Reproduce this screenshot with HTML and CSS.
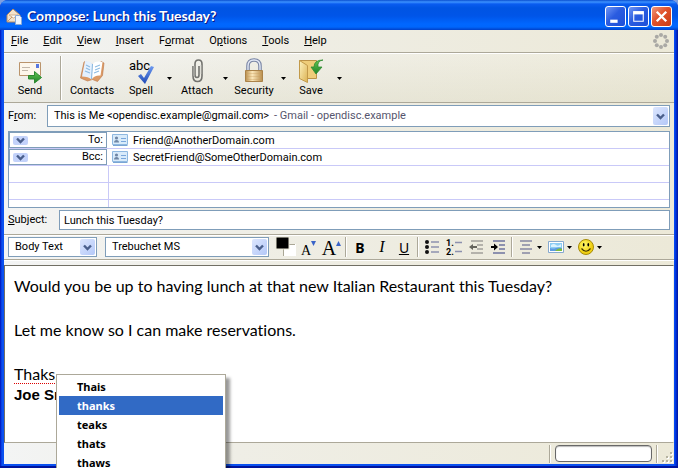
FILE: index.html
```html
<!DOCTYPE html>
<html lang="en">
<head>
<meta charset="utf-8">
<title>Compose: Lunch this Tuesday?</title>
<link rel="stylesheet" href="styles.css">
</head>
<body>
<svg class="defs" aria-hidden="true">
  <defs>
    <linearGradient id="gold" x1="0" x2="1" y1="0" y2="0"><stop offset="0" stop-color="#b98f4e"/><stop offset=".4" stop-color="#fbe6b8"/><stop offset="1" stop-color="#b88d4c"/></linearGradient>
    <linearGradient id="folder" x1="0" x2="1" y1="0" y2="1"><stop offset="0" stop-color="#fdf3c0"/><stop offset="1" stop-color="#dcb252"/></linearGradient>
    <linearGradient id="green" x1="0" x2="0" y1="0" y2="1"><stop offset="0" stop-color="#62c552"/><stop offset="1" stop-color="#1f8328"/></linearGradient>
    <linearGradient id="tick" x1="0" x2="0" y1="0" y2="1"><stop offset="0" stop-color="#6d9af0"/><stop offset="1" stop-color="#1f49b5"/></linearGradient>
    <radialGradient id="smile" cx=".4" cy=".35"><stop offset="0" stop-color="#fffa70"/><stop offset="1" stop-color="#f0cf12"/></radialGradient>
    <symbol id="chevron" viewBox="0 0 9 7"><path d="M1 1.5 4.5 5 8 1.5" fill="none" stroke="#4a5f8c" stroke-width="2.4"/></symbol>
    <symbol id="down" viewBox="0 0 5 3"><path d="M0 0h5L2.500 3z"/></symbol>
    <symbol id="card" viewBox="0 0 16 12"><path d="M.5.5h15v10H.5z" fill="#d9ebfa" stroke="#8fb8e0"/><path d="M1 11.5h14.500" stroke="#7aa5d4"/><circle cx="4.500" cy="4" r="1.600" fill="#6f86a5"/><path d="M2 8.500q0-2.500 2.500-2.500T7 8.500z" fill="#6f86a5"/><path d="M9 4.500h5M9 7.500h5" stroke="#7aa7dc"/></symbol>
  </defs>
</svg>
<div class="window">
  <header class="titlebar">
    <svg class="app-icon" viewBox="0 0 17 17"><path d="M1 7 7 1l7 6v7H1z" fill="#f3e2cb" stroke="#b58a62"/><path d="M3 7h9l-4.500 3z" fill="#fff" stroke="#d0ad86"/><path d="m1 14 5-5M14 14 9 9" stroke="#c49a70"/><path d="M9.500 7.500h4l2 2v7h-6z" fill="#eef5ff" stroke="#8aa9d6"/></svg>
    <h1>Compose: Lunch this Tuesday?</h1>
    <div class="controls">
      <button class="ctl" aria-label="Minimize"><svg viewBox="0 0 18 18"><path d="M4 12h7v3H4z" fill="#fff"/></svg></button>
      <button class="ctl" aria-label="Maximize"><svg viewBox="0 0 18 18"><path d="M4.500 4.500h9v9h-9z" fill="none" stroke="#fff"/><path d="M4 4h10v3H4z" fill="#fff"/></svg></button>
      <button class="ctl close" aria-label="Close"><svg viewBox="0 0 18 18"><path d="m4.500 4.500 9 9m0-9-9 9" stroke="#fff" stroke-width="2.200"/></svg></button>
    </div>
  </header>
  <div class="content">
    <nav class="menubar">
      <button><u>F</u>ile</button><button><u>E</u>dit</button><button><u>V</u>iew</button><button><u>I</u>nsert</button><button>F<u>o</u>rmat</button><button>O<u>p</u>tions</button><button><u>T</u>ools</button><button><u>H</u>elp</button>
      <svg class="throbber" viewBox="0 0 16 16" fill="#aaa9a5"><circle cx="8" cy="2" r="2"/><circle cx="12.200" cy="3.800" r="2"/><circle cx="14" cy="8" r="2"/><circle cx="12.200" cy="12.200" r="2"/><circle cx="8" cy="14" r="2"/><circle cx="3.800" cy="12.200" r="2"/><circle cx="2" cy="8" r="2"/><circle cx="3.800" cy="3.800" r="2"/></svg>
    </nav>
    <div class="toolbar">
      <button class="tool send"><svg viewBox="0 0 26 26"><path d="M2.500 4.500h21v13h-21z" fill="#fdf7ec" stroke="#ba946c"/><path d="M5 9.500h8M5 12.500h6" stroke="#c2b7aa"/><path d="M19 6h3v4h-3z" fill="#5878e0"/><path d="M11.500 17.500h6v-4l7 6-7 5.500v-4h-6z" fill="url(#green)" stroke="#2c8a31"/></svg>Send</button>
      <span class="divider"></span>
      <button class="tool contacts"><svg viewBox="0 0 26 26"><path d="M5 4 1.500 20l7 3 5-1.500 5 2 5-6L25 5l-3-1.500-1 1-7 2-8-3z" fill="#dc9a66" stroke="#b97345" stroke-width=".6"/><path d="M6 3q5 0 7.500 3l-1 15.500q-3-3-9.500-3z" fill="#e4f1ff"/><path d="M13.500 6q3-3.500 10-2l-2 13.500q-6-.5-9 4z" fill="#fff"/><path d="M13.500 6l-1 15M7 7l4 2M7 10l4 2M6 13l5 2M16 9l5-2M16 12l5-2M15 15l5-2" fill="none" stroke="#8dbbe2" stroke-width="1.100"/></svg>Contacts</button>
      <button class="tool spell"><svg viewBox="0 0 26 26"><text x="1" y="12" class="abc">abc</text><path d="m10 18 3-2 3 4 7-12 3 1-9 17z" fill="url(#tick)"/></svg>Spell</button>
      <button class="drop" aria-label="Spell options"><svg><use href="#down"/></svg></button>
      <button class="tool attach"><svg viewBox="0 0 26 26" fill="none" stroke="#72726e" stroke-width="1.600"><path d="M9 8v10q0 5.500 4.500 5.500T18 18V6q0-4-3.500-4T11 6v11q0 2.500 2 2.500t2-2.500V8"/><path d="M10 8v10M17 7v9" stroke="#c5c5c0" stroke-width=".7"/></svg>Attach</button>
      <button class="drop" aria-label="Attach options"><svg><use href="#down"/></svg></button>
      <button class="tool security"><svg viewBox="0 0 26 26"><path d="M7 13V8q0-6 6-6t6 6v5" fill="none" stroke="#7a86a5" stroke-width="3.600"/><path d="M7 13V8q0-6 6-6t6 6v5" fill="none" stroke="#e2e8f5" stroke-width="1.400"/><path d="M4.500 12.500h17v11h-17z" fill="url(#gold)" stroke="#aa8248"/><path d="M5 15.500h16M5 18.500h16M5 21.500h16" stroke="#c99f5f" stroke-opacity=".35"/></svg>Security</button>
      <button class="drop" aria-label="Security options"><svg><use href="#down"/></svg></button>
      <button class="tool save"><svg viewBox="0 0 26 26"><path d="M1.500 2.500h17v18h-17z" fill="#efcd79" stroke="#bb9247"/><path d="m1.500 2.500 8 5v17l-8-4z" fill="url(#folder)" stroke="#c29a4a"/><path d="M25 2q-6 1-5 7h4l-6 7-5-7h3Q16 2 25 2z" fill="url(#green)" stroke="#2e8c31" stroke-width=".8"/></svg>Save</button>
      <button class="drop" aria-label="Save options"><svg><use href="#down"/></svg></button>
    </div>
    <form class="headers">
      <div class="field">
        <label for="from">F<u>r</u>om:</label>
        <div class="select">
          <select id="from"><option>This is Me &lt;opendisc.example@gmail.com&gt;</option></select>
          <span class="account">- Gmail - opendisc.example</span>
          <svg class="arrow"><use href="#chevron" x="3" y="6" width="9" height="7"/></svg>
        </div>
      </div>
      <div class="recipients">
        <div class="recipient"><div class="kind"><select aria-label="Recipient type 1"><option>To:</option></select><svg><use href="#chevron" x="3" y="1" width="9" height="7"/></svg></div><svg class="card"><use href="#card"/></svg><input aria-label="Recipient 1" value="Friend@AnotherDomain.com"></div>
        <div class="recipient"><div class="kind"><select aria-label="Recipient type 2"><option>Bcc:</option></select><svg><use href="#chevron" x="3" y="1" width="9" height="7"/></svg></div><svg class="card"><use href="#card"/></svg><input aria-label="Recipient 2" value="SecretFriend@SomeOtherDomain.com"></div>
        <div class="recipient blank"></div>
        <div class="recipient blank"></div>
        <div class="recipient blank"></div>
      </div>
      <div class="field subject">
        <label for="subject"><u>S</u>ubject:</label>
        <input id="subject" value="Lunch this Tuesday?">
      </div>
    </form>
    <div class="formatbar">
      <div class="select style"><select aria-label="Paragraph style"><option>Body Text</option></select><svg class="arrow"><use href="#chevron" x="3" y="5" width="9" height="7"/></svg></div>
      <div class="select font"><select aria-label="Font"><option>Trebuchet MS</option></select><svg class="arrow"><use href="#chevron" x="3" y="5" width="9" height="7"/></svg></div>
      <button class="fmt swatch" aria-label="Text colour"><svg viewBox="0 0 22 20"><path d="M8 7h13v12H8z" fill="#fff"/><path d="M20 7.500H8.500V19" fill="none" stroke="#aaa796"/><path d="M1 0h13v12H1z" fill="#000" stroke="#ece9d8"/></svg></button>
      <button class="fmt letter small" aria-label="Smaller">A<svg viewBox="0 0 5 5"><path d="M0 0h5L2.500 5z"/></svg></button>
      <button class="fmt letter large" aria-label="Larger">A<svg viewBox="0 0 5 5"><path d="M0 5h5L2.500 0z"/></svg></button>
      <span class="divider"></span>
      <button class="fmt bold" aria-label="Bold">B</button>
      <button class="fmt italic" aria-label="Italic">I</button>
      <button class="fmt under" aria-label="Underline">U</button>
      <span class="divider"></span>
      <button class="fmt list" aria-label="Bulleted list"><svg viewBox="0 0 16 16"><g fill="#111"><circle cx="3" cy="3" r="2"/><circle cx="3" cy="8" r="2"/><circle cx="3" cy="13" r="2"/></g><path d="M7 3h8M7 8h8M7 13h8" stroke="#8d91ae" stroke-width="1.600"/></svg></button>
      <button class="fmt list" aria-label="Numbered list"><svg viewBox="0 0 16 16"><text x="0" y="7" class="num">1.</text><text x="0" y="16" class="num">2.</text><path d="M9 3.500h7M9 12.500h7" stroke="#8d91ae" stroke-width="1.600"/></svg></button>
      <button class="fmt indent" aria-label="Outdent"><svg viewBox="0 0 16 16"><path d="M3 2h12M9 6h6M9 10h6M3 14h12" stroke="#b4b2ab" stroke-width="2"/><path d="m1 8 4-3v2h4v2H5v2z" fill="#65645d"/></svg></button>
      <button class="fmt indent" aria-label="Indent"><svg viewBox="0 0 16 16"><path d="M3 2h12M9 6h6M9 10h6M3 14h12" stroke="#8d91ae" stroke-width="2"/><path d="M8 8 4 4.500V7H1v2h3v2.500z"/></svg></button>
      <span class="divider"></span>
      <button class="fmt wide" aria-label="Align"><svg viewBox="0 0 16 16"><path d="M2 2h12M4 6h8M2 10h12M4 14h8" stroke="#8588a2" stroke-width="1.700"/></svg><svg class="tri"><use href="#down"/></svg></button>
      <button class="fmt wide" aria-label="Insert picture"><svg viewBox="0 0 16 16"><path d="M.5 2.500h15v11H.5z" fill="#fff" stroke="#85a9cf"/><path d="M2 4h12v8H2z" fill="#8dcdf4"/><path d="M3 6q3-2 5 0t5-1v3H3z" fill="#daf2ff"/><path d="M2 9q3 1 6 0t6 0v3H2z" fill="#5d9be0"/><path d="M7 12q4-4 7-2v2z" fill="#7dbd3c"/></svg><svg class="tri"><use href="#down"/></svg></button>
      <button class="fmt wide" aria-label="Insert smiley"><svg viewBox="0 0 16 16"><circle cx="8" cy="8" r="7.500" fill="url(#smile)" stroke="#a58b0b"/><ellipse cx="5.700" cy="5.700" rx=".9" ry="1.700"/><ellipse cx="10.300" cy="5.700" rx=".9" ry="1.700"/><path d="M3.500 9.500q4.500 5.500 9 0" fill="none" stroke="#3e3300" stroke-width="1.200"/></svg><svg class="tri"><use href="#down"/></svg></button>
    </div>
    <main class="editor">
      <div class="message" contenteditable="true" role="textbox" aria-label="Message body" spellcheck="false">
        <p>Would you be up to having lunch at that new Italian Restaurant this Tuesday?</p>
        <p><br></p>
        <p>Let me know so I can make reservations.</p>
        <p><br></p>
        <p><span class="misspelt">Thaks,</span></p>
        <p class="signature">Joe Smith</p>
      </div>
      <div class="suggestions" role="menu">
        <button role="menuitem">Thais</button>
        <button role="menuitem" class="active">thanks</button>
        <button role="menuitem">teaks</button>
        <button role="menuitem">thats</button>
        <button role="menuitem">thaws</button>
      </div>
    </main>
    <footer class="statusbar">
      <span class="divider"></span>
      <div class="progress" role="progressbar" aria-label="Progress"></div>
      <span class="divider"></span>
      <svg class="grip" viewBox="0 0 12 12"><path d="M9 1h2v2H9zM5 5h2v2H5zM9 5h2v2H9zM1 9h2v2H1zM5 9h2v2H5zM9 9h2v2H9z" fill="#fff"/><path d="M8 0h2v2H8zM4 4h2v2H4zM8 4h2v2H8zM0 8h2v2H0zM4 8h2v2H4zM8 8h2v2H8z" fill="#b5b29f"/></svg>
    </footer>
  </div>
</div>
</body>
</html>
```

FILE: styles.css
```css
* { box-sizing: border-box; }

body {
  margin: 0;
  overflow: hidden;
  background: #7f9fe0;
  color: #000;
  font: 11px/14px Roboto, "Noto Sans", sans-serif;
}

button, select, input {
  margin: 0;
  padding: 0;
  border: 0;
  background: none;
  color: inherit;
  font: inherit;
  appearance: none;
}

.defs { position: absolute; width: 0; height: 0; }

.window {
  display: flex;
  flex-direction: column;
  height: 100vh;
  padding: 0 4px 4px;
  border-radius: 8px 8px 0 0;
  background: linear-gradient(90deg, #0010b8 0, #0a50f0 2px, #0a50f0 calc(100% - 4px), #0040f0 calc(100% - 3px), #00139c 100%);
  box-shadow: inset 0 -2px #00139c;
}

.titlebar {
  display: flex;
  align-items: center;
  gap: 4px;
  height: 30px;
  margin: 0 -4px;
  padding: 2px 6px 0;
  border-radius: 8px 8px 0 0;
  background: linear-gradient(#0a4fd0 0, #3c92ff 2px, #0a5cf0 4px, #0054e3 8px, #0055e8 16px, #0067ff 24px, #0066fc 27px, #0040c8 30px);
}

.titlebar h1 {
  flex: 1;
  margin: 0;
  color: #fff;
  font: bold 14px/18px Lato, sans-serif;
  text-shadow: 1px 1px #0a1883;
}

.app-icon { width: 17px; height: 17px; }

.controls { display: flex; gap: 2px; }

.ctl {
  width: 21px;
  height: 21px;
  border: 1px solid #fff;
  border-radius: 3px;
  background: linear-gradient(135deg, #7096f4, #2a5ce0 45%, #1d4fd8);
}

.ctl.close { background: linear-gradient(135deg, #f0987c, #e0512b 45%, #c93c14); }
.ctl svg { display: block; width: 19px; height: 19px; }

.content {
  display: flex;
  flex: 1;
  flex-direction: column;
  min-height: 0;
  background: linear-gradient(90deg, #f3f4f4, #efeee6 35%, #ece9d8);
}

.menubar {
  display: flex;
  align-items: center;
  height: 23px;
  border-bottom: 1px solid #aca899;
}

.menubar button { padding: 0 8px 0 7px; }
.throbber { width: 16px; height: 16px; margin: 0 5px 0 auto; }

.toolbar {
  display: flex;
  align-items: center;
  height: 50px;
  padding: 0 5px;
  border-top: 1px solid #fff;
  border-bottom: 1px solid #aca899;
  background: linear-gradient(rgba(255, 255, 255, .1), rgba(210, 207, 180, .25));
}

.divider {
  width: 2px;
  border-left: 1px solid #aca899;
  border-right: 1px solid #fff;
}

.toolbar .divider { height: 44px; margin-left: 9px; }

.tool {
  display: flex;
  flex-direction: column;
  align-items: center;
  width: 38px;
}

.tool svg { width: 26px; height: 26px; overflow: visible; }
.send { width: 42px; }
.contacts { width: 60px; }
.security { width: 40px; }
.abc { font: 13px Roboto, sans-serif; }
.drop { width: 18px; height: 20px; }
.drop svg, .tri { display: block; width: 5px; height: 3px; margin: auto; }

.headers { padding: 2px 4px 4px; }

.field { display: flex; align-items: center; }
.field label { width: 39px; }

.select { position: relative; flex: 1; }

.select select, .subject input {
  display: block;
  width: 100%;
  height: 22px;
  padding: 0 6px;
  border: 1px solid #7f9db9;
  background: #fff;
}

.arrow {
  position: absolute;
  top: 2px;
  right: 2px;
  width: 15px;
  height: 18px;
  border-radius: 2px;
  background: linear-gradient(135deg, #dce6fe, #b4c8f8);
  pointer-events: none;
}

.account {
  position: absolute;
  top: 4px;
  left: 227px;
  color: #55556d;
}

.recipients {
  height: 77px;
  margin: 4px 0 2px;
  overflow: hidden;
  border: 1px solid #7f9db9;
  background: #fff;
}

.recipient {
  display: flex;
  align-items: center;
  height: 17px;
  border-bottom: 1px solid #c9c9f8;
}

.kind { position: relative; width: 98px; height: 16px; }
.kind select { width: 100%; height: 16px; padding-right: 3px; border: 1px solid #7f9db9; text-align: right; text-align-last: right; }

.kind svg {
  position: absolute;
  top: 4px;
  left: 4px;
  width: 15px;
  height: 9px;
  border-radius: 2px;
  background: #c3d2fa;
  pointer-events: none;
}

.card { width: 16px; height: 12px; margin: 0 5px; }
.recipient input { flex: 1; height: 16px; }
.blank::before { width: 99px; height: 17px; border-right: 1px solid #c9c9f8; content: ""; }

.subject label { width: 51px; }
.subject input { flex: 1; width: auto; height: 20px; padding: 0 4px; }

.formatbar {
  display: flex;
  align-items: center;
  height: 26px;
  padding: 0 4px;
  border-top: 1px solid #aca899;
  border-bottom: 1px solid #aca899;
  box-shadow: inset 0 1px #fff, 0 1px #fff;
}

.formatbar .select { flex: none; }
.formatbar .select select { height: 20px; }
.formatbar .arrow { height: 16px; }
.style { width: 89px; }
.font { width: 164px; margin: 0 6px 0 8px; }
.formatbar .divider { height: 20px; margin: 0 2px; }

.fmt { display: flex; align-items: center; justify-content: center; width: 22px; height: 22px; }
.fmt svg { width: 16px; height: 16px; }
.swatch svg { width: 22px; height: 20px; }
.letter { width: 23px; font-family: "Liberation Serif", serif; align-items: flex-end; }
.letter svg { width: 5px; height: 5px; margin-bottom: 12px; fill: #3a64c8; }
.small { font-size: 14px; }
.large { font-size: 20px; line-height: 20px; }
.bold { font: bold 14px "Noto Sans", sans-serif; }
.italic { font: italic 16px "Liberation Serif", serif; }
.under { font: 14px "Noto Sans", sans-serif; text-decoration: underline; }
.list svg { overflow: visible; }
.num { font: bold 9px Roboto, sans-serif; }
.fmt .tri { width: 5px; height: 3px; margin: 0 0 0 3px; }
.wide { width: 30px; }

.editor {
  position: relative;
  flex: 1;
  min-height: 0;
  margin-top: 5px;
  padding: 9px;
  border: 1px solid #716f64;
  border-right-color: #f1efe2;
  border-bottom-color: #aca899;
  background: #fff;
}

.message { outline: 0; font: 16px/22px Lato, sans-serif; font-variant-ligatures: none; }
.message p { margin: 0; }
.misspelt { text-decoration: underline dotted #d00 1px; text-underline-offset: 3px; }
.message .signature { font: bold 15px/20px "Liberation Sans", sans-serif; }

.suggestions {
  position: absolute;
  z-index: 1;
  top: 108px;
  left: 51px;
  width: 170px;
  padding: 2px;
  border: 1px solid #aca899;
  background: #fff;
  box-shadow: 4px 4px 3px rgba(0, 0, 0, .4);
}

.suggestions button {
  display: block;
  width: 100%;
  height: 19px;
  padding-left: 18px;
  font: bold 11px/14px "Noto Sans", sans-serif;
  text-align: left;
}

.suggestions .active { background: #316ac5; color: #fff; }

.statusbar {
  display: flex;
  align-items: center;
  justify-content: flex-end;
  height: 21px;
  gap: 4px;
}

.statusbar .divider { height: 18px; }
.progress { width: 97px; height: 17px; border: 1px solid #686868; border-radius: 4px; background: #fff; box-shadow: inset 0 1px 1px #bbb; }
.grip { align-self: flex-end; width: 12px; height: 12px; }
```
